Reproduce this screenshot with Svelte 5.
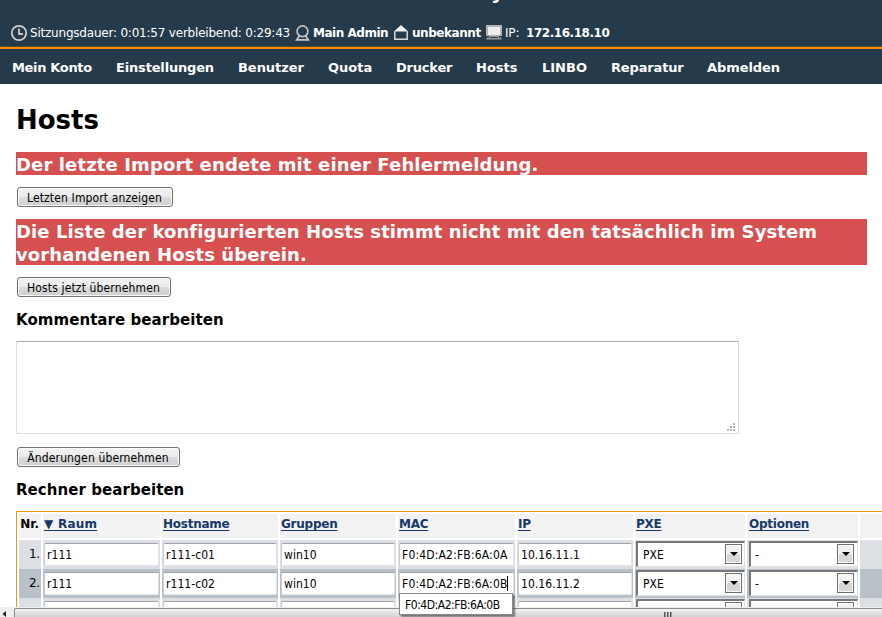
<script>
  // label, item width, letter spacing
  const nav = [
    ['Mein Konto', 80, -0.34], ['Einstellungen', 98, -0.17], ['Benutzer', 66, -0.05], ['Quota', 44, 0], ['Drucker', 56, -0.2],
    ['Hosts', 42, 0], ['LINBO', 45, 0], ['Reparatur', 72, -0.15], ['Abmelden', 73, -0.08]
  ];
  const heads = [
    ['▼ Raum', 'raum'], ['Hostname', 'hostname'], ['Gruppen', 'gruppen'], ['MAC', 'mac-head'],
    ['IP', 'ip-head'], ['PXE', 'pxe'], ['Optionen', 'optionen']
  ];
  const rows = [
    { nr: '1.', fields: ['r111', 'r111-c01', 'win10', 'F0:4D:A2:FB:6A:0A', '10.16.11.1'], picks: ['PXE', '-'] },
    { nr: '2.', fields: ['r111', 'r111-c02', 'win10', 'F0:4D:A2:FB:6A:0B', '10.16.11.2'], picks: ['PXE', '-'], active: true },
    { nr: '', fields: ['', '', '', '', ''], picks: ['', ''] }
  ];
</script>

<div class="page">
  <header>
    <div class="title">y</div>
    <div class="status">
      <svg class="clock" width="18" height="18" viewBox="0 0 18 18" fill="none"><circle cx="9" cy="9" r="7.2" stroke="#d5d0cf" stroke-width="1.7" /><path d="M9 4.5V10h4" stroke="#f1f1f1" stroke-width="1.4" /></svg>
      <span class="session">Sitzungsdauer: 0:01:57 verbleibend: 0:29:43</span>
      <svg class="user" width="16" height="18" viewBox="0 0 16 18" fill="none" stroke="#c9c5c5" stroke-width="1.7"><circle cx="7.5" cy="7.3" r="5.4" /><path d="M4.5 11.8l-2.8 4h11.6L10.5 11.8" /></svg>
      <b class="name">Main Admin</b>
      <svg class="house" width="16" height="18" viewBox="0 0 16 18"><path d="M1 7.5L8 1l7 6.5z" fill="#f4f4f4" /><path d="M1.8 7v8.3h12.4V7" fill="none" stroke="#d8dadd" stroke-width="1.5" /></svg>
      <b class="room">unbekannt</b>
      <svg class="screen" width="16" height="18" viewBox="0 0 16 18"><path d="M0 1h16v11H0z" fill="#b4b4b6" /><path d="M2 3h12v8H2z" fill="#eee" /><path d="M3 12h10v1.5h2l1 2H0l1-2h2z" fill="#98999c" /><path d="M4 13h8v1H4z" fill="#353c43" /></svg>
      <span class="ip">IP: </span><b class="addr">172.16.18.10</b>
    </div>
  </header>
  <nav>{#each nav as [label, w, ls]}<a href="#top" style="width:{w}px;letter-spacing:{ls}px">{label}</a>{/each}</nav>
  <main>
    <h1>Hosts</h1>
    <h2><span class="w1">Der letzte Import endete mit einer Fehlermeldung.</span></h2>
    <button style="width:156px">Letzten Import anzeigen</button>
    <h2 class="two"><span class="w2">Die Liste der konfigurierten Hosts stimmt nicht mit den tatsächlich im System</span><br /><span class="w3">vorhandenen Hosts überein.</span></h2>
    <button style="width:154px">Hosts jetzt übernehmen</button>
    <h3>Kommentare bearbeiten</h3>
    <div class="area">
      <svg width="9" height="9" fill="#b5b2ac"><path d="M6.5 0h1.5v2h-2v-1zM3.5 3h1.5v2h-2v-1zM6.5 3h1.5v2h-2v-1zM.5 6h1.5v2h-2v-1zM3.5 6h1.5v2h-2v-1zM6.5 6h1.5v2h-2v-1z" /></svg>
    </div>
    <button style="width:163px">Änderungen übernehmen</button>
    <h3>Rechner bearbeiten</h3>
    <div class="table">
      <div class="row head">
        <div class="nr">Nr.</div>
        {#each heads as [h, cls]}<div><a href="#top" class={cls}>{h}</a></div>{/each}
        <div></div>
      </div>
      {#each rows as r}
        <div class="row" class:active={r.active}>
          <div class="nr">{r.nr}</div>
          {#each r.fields as f, i}
            <div><span class="input" class:mac={i === 3}>{f}{#if r.active && i === 3}<i class="caret"></i>{/if}</span></div>
          {/each}
          {#each r.picks as p, i}
            <div><span class="select" class:options={i === 1}><span>{p}</span><i class="arrow"></i></span></div>
          {/each}
          <div></div>
        </div>
      {/each}
    </div>
  </main>
  <div class="scroll">
    <svg width="14" height="10"><path d="M6 4v6L2.5 7z" fill="#222" /></svg>
    <div class="thumb"><i></i><i></i><i></i></div>
  </div>
  <div class="popup">F0:4D:A2:FB:6A:0B</div>
</div>

<style>
  :global(body) { overflow: hidden; background: #fff; }
  .page { position: relative; width: 882px; height: 617px; overflow: hidden; display: flex; flex-direction: column; font-family: 'DejaVu Sans', sans-serif; color: #000; }
  header { height: 47px; flex: none; background: #253a4a; border-bottom: 1px solid #5d4a35; color: #fff; box-sizing: border-box; overflow: hidden; }
  .title { height: 23px; margin-top: -19px; line-height: 23px; padding-left: 491px; font-size: 20px; font-weight: bold; white-space: nowrap; }
  .status { display: flex; align-items: center; height: 18px; margin-top: 20px; padding-left: 10px; font-size: 12px; white-space: nowrap; }
  .status svg { flex: none; }
  .session { width: 264px; margin-left: 2px; letter-spacing: -.21px; }
  .user { margin-left: 1px; }
  .name { width: 80px; margin-left: 2px; letter-spacing: -.48px; }
  .room { width: 74px; margin-left: 3px; letter-spacing: -.45px; }
  .ip { width: 21px; margin-left: 3px; letter-spacing: -.2px; }
  .addr { letter-spacing: -.45px; }
  nav { height: 33px; flex: none; background: #253a4a; border-top: 2px solid #ff9000; padding: 2px 0 0 12px; display: flex; gap: 24px; align-items: center; box-sizing: content-box; }
  nav a { flex: none; color: #fff; font-weight: bold; font-size: 13px; text-decoration: none; white-space: nowrap; }
  main { height: 523px; flex: none; overflow: hidden; padding-left: 16px; }
  h1 { font-size: 26px; line-height: 32px; margin: 20px 0 16px; }
  h2 { width: 851px; margin: 0 0 12px; background: #d65050; color: #fff; font-size: 18px; line-height: 23px; height: 23px; white-space: nowrap; }
  h2 span { position: relative; top: 1px; }
  .w1 { letter-spacing: .13px; }
  .w2 { letter-spacing: .085px; }
  .w3 { letter-spacing: .09px; }
  h2.two { height: 46px; margin-top: 12px; }
  button { display: block; box-sizing: border-box; height: 20px; margin: 0 0 0 1px; padding: 1px 1px 0 0; border: 1px solid #707070; border-radius: 3px; box-shadow: inset 0 0 0 1px #fafafa; background: linear-gradient(#f2f2f2, #ebebeb 50%, #dcdcdc 50%, #cfcfcf); font: 12px/18px 'DejaVu Sans Condensed', 'DejaVu Sans', sans-serif; letter-spacing: .14px; color: #000; white-space: nowrap; }
  h3 { margin: 13px 0 0; height: 31px; font-size: 15px; line-height: 20px; letter-spacing: .06px; }
  .area { box-sizing: border-box; width: 723px; height: 93px; border: 1px solid #dcdce4; border-top-color: #abadb3; border-radius: 1px; margin-bottom: 13px; display: flex; justify-content: flex-end; align-items: flex-end; padding: 0 2px 1px 0; }
  .table { width: 880px; border: 1px solid #f49611; padding: 2px; display: flex; flex-direction: column; gap: 2px; }
  .row { flex: none; display: grid; grid-template-columns: 22px 117px 116px 116px 117px 116px 110px 111px 30px; gap: 2px; height: 27px; }
  .row > div { background: #dce0e4; min-width: 0; }
  .row.active > div { background: #b8c0c8; }
  .head { height: 24px; font-size: 12px; font-weight: bold; line-height: 20px; }
  .row.head > div { background: #f2f2f2; white-space: nowrap; }
  .head a { color: #16386b; margin-left: 1px; text-underline-offset: 2px; letter-spacing: -.25px; }
  .head a.raum { letter-spacing: .25px; }
  .head a.optionen { margin-left: 2px; }
  .nr { text-align: right; font-size: 12px; line-height: 29px; padding-right: 1px; letter-spacing: -.2px; }
  .head .nr { line-height: 20px; letter-spacing: 0; padding-right: 2px; }
  .input { display: block; box-sizing: border-box; height: 23px; margin: 3px 1px 1px; border: 1px solid #e1e4e9; border-top-color: #9fa3aa; border-left-color: #c8ccd3; border-radius: 2px; background: #fff; padding-left: 2px; font: 12px/22px 'DejaVu Sans Condensed', 'DejaVu Sans', sans-serif; letter-spacing: .05px; white-space: nowrap; }
  .mac { letter-spacing: .17px; }
  .caret { display: inline-block; width: 1px; height: 15px; background: #000; vertical-align: -3px; margin-left: -1px; }
  .select { display: flex; justify-content: space-between; box-sizing: border-box; height: 26px; margin: 1px 0 0 1px; border: 2px solid #777; border-right: 1px solid #e2e2e2; border-bottom: 1px solid #e2e2e2; background: #fff; padding: 1px 2px 1px 5px; font: 12px/22px 'DejaVu Sans Condensed', 'DejaVu Sans', sans-serif; }
  .options { margin-left: 2px; padding-right: 3px; padding-left: 4px; }
  .arrow { box-sizing: border-box; width: 17px; height: 20px; border: 1px solid #707070; box-shadow: inset 0 0 0 1px #fafafa; background: linear-gradient(#f2f2f2 50%, #d6d6d6 50%); display: flex; align-items: center; justify-content: center; }
  .arrow::after { content: ''; border: 4px solid transparent; border-top-color: #000; border-bottom: 0; }
  .scroll { height: 10px; flex: none; background: #efefef; display: flex; }
  .thumb { flex: 1; margin-top: 1px; border: 1px solid #8b8b8b; border-width: 1px 0 0 1px; border-radius: 2px 0 0; background: linear-gradient(#f4f4f4, #d2d2d2); display: flex; gap: 1px; padding: 3px 0 0 649px; }
  .thumb i { width: 2px; height: 8px; background: linear-gradient(90deg, #555 50%, #999 50%); }
  .popup { position: absolute; left: 399px; top: 593px; box-sizing: border-box; width: 114px; height: 22px; border: 1px solid #888; background: #fff; box-shadow: 2px 2px 2px #0007; padding-left: 5px; font: 12px/22px 'DejaVu Sans Condensed', 'DejaVu Sans', sans-serif; letter-spacing: -.47px; white-space: nowrap; }
</style>
